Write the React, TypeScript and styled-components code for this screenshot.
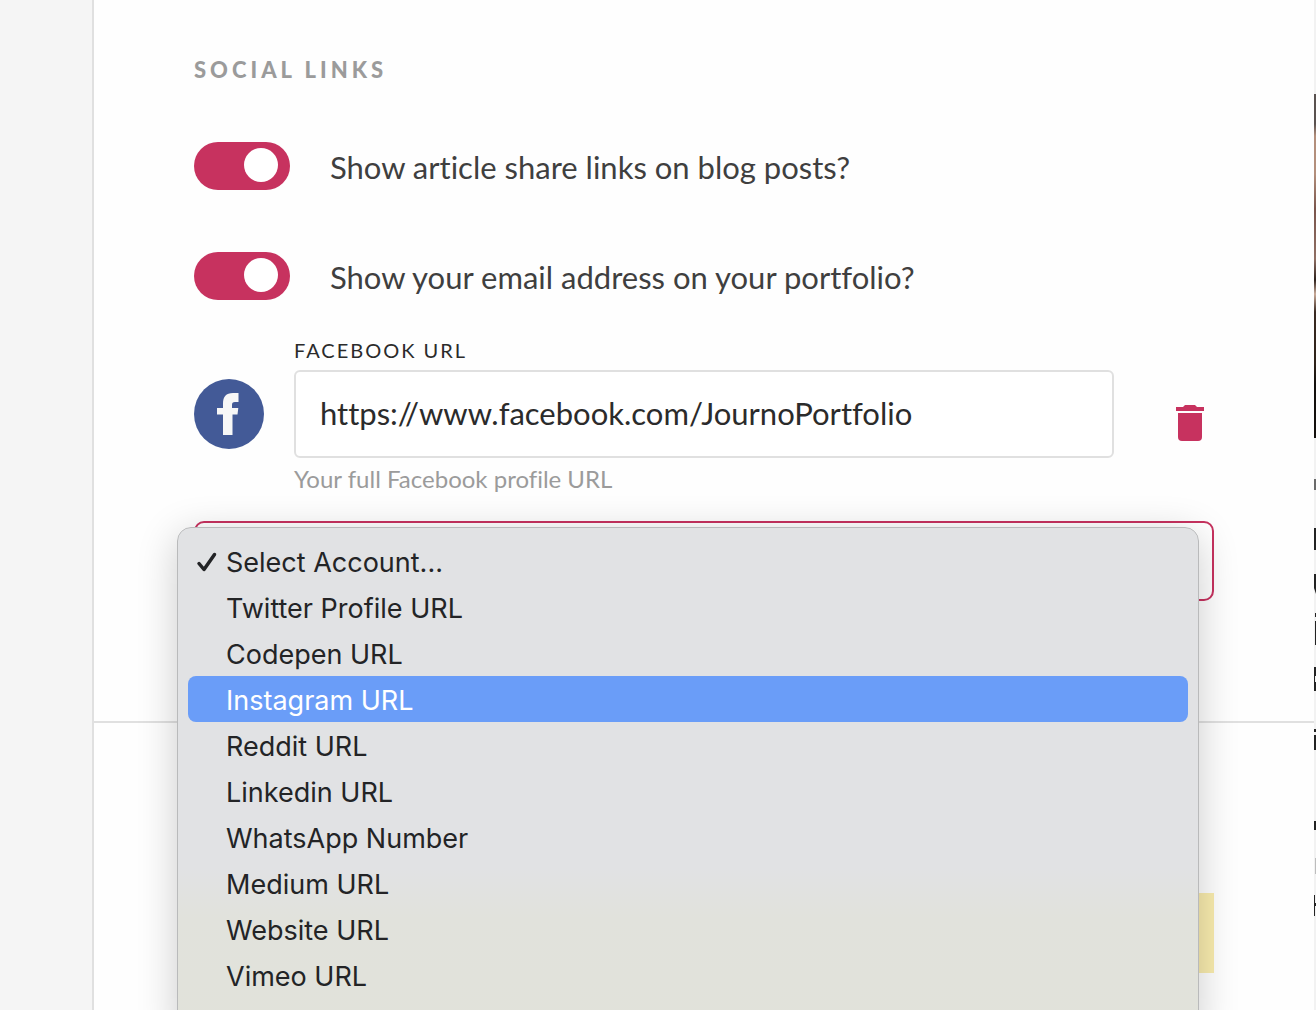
import React, { useState } from "react";
import styled, { createGlobalStyle } from "styled-components";

const color = {
  accent: "#c7325f",
  facebook: "#435a97",
  line: "#e0e0e0",
  text: "#3f3f3f",
  strong: "#2b2b2b",
  muted: "#9b9b9b",
};

const GlobalStyle = createGlobalStyle`
  *, *::before, *::after { box-sizing: border-box; }
  body {
    margin: 0;
    background: #fefefe;
    font-family: Lato, "Open Sans", sans-serif;
    font-variant-ligatures: none;
    color: ${color.text};
  }
`;

const Page = styled.div`
  display: grid;
  grid-template-columns: 94px minmax(0, 1fr) 2px;
  min-height: 100vh;
  max-height: 100vh;
  overflow: hidden;
`;

const Sidebar = styled.aside`
  background: #f5f5f5;
  border-right: 2px solid ${color.line};
`;

const Settings = styled.main`
  display: flex;
  flex-direction: column;
`;

const Section = styled.section`
  padding: 56px 100px 120px;
  border-bottom: 2px solid ${color.line};
`;

const NoticeSection = styled.section`
  padding: 170px 100px 0;
`;

const Notice = styled.div`
  height: 80px;
  background: #f9ecae;
`;

const Heading = styled.h2`
  margin: 0 0 58px;
  font-size: 22px;
  line-height: 28px;
  font-weight: 900;
  letter-spacing: 4px;
  text-transform: uppercase;
  color: ${color.muted};
`;

const ToggleRow = styled.label`
  display: flex;
  align-items: flex-start;
  gap: 40px;
  height: 48px;
  margin-bottom: 62px;
  font-size: 31px;
  line-height: 50px;

  & + & {
    margin-bottom: 40px;
  }
`;

const Switch = styled.input`
  appearance: none;
  flex: none;
  display: flex;
  justify-content: flex-start;
  width: 96px;
  height: 48px;
  margin: 0;
  padding: 6px 12px;
  border-radius: 24px;
  background: #c4c4c4;
  cursor: pointer;

  &::before {
    content: "";
    width: 34px;
    height: 34px;
    border-radius: 50%;
    background: #fff;
  }

  &:checked {
    justify-content: flex-end;
    background: ${color.accent};
  }
`;

const LinkRow = styled.div`
  display: grid;
  grid-template-columns: 70px minmax(0, 1fr) 28px;
  grid-template-areas:
    ". label ."
    "icon input remove"
    ". help .";
  column-gap: 30px;
  padding-right: 10px;
`;

const LinkLabel = styled.label`
  grid-area: label;
  margin-bottom: 10px;
  font-size: 20px;
  line-height: 20px;
  letter-spacing: 2px;
  text-transform: uppercase;
  color: ${color.strong};
`;

const BrandIcon = styled.svg`
  grid-area: icon;
  align-self: center;
  width: 70px;
  height: 70px;
`;

const LinkInput = styled.input`
  grid-area: input;
  width: calc(100% - 32px);
  height: 88px;
  padding: 0 24px 2px;
  border: 2px solid ${color.line};
  border-radius: 6px;
  background: #fff;
  font: 400 31px Lato, sans-serif;
  font-variant-ligatures: none;
  color: ${color.strong};
  outline: none;
`;

const Help = styled.p`
  grid-area: help;
  margin: 7px 0 28px;
  font-size: 24px;
  line-height: 28px;
  color: ${color.muted};
`;

const RemoveButton = styled.button`
  grid-area: remove;
  align-self: end;
  display: flex;
  margin-bottom: 17px;
  padding: 0;
  border: 0;
  background: none;
  color: ${color.accent};
  cursor: pointer;
`;

const AccountPicker = styled.div`
  position: relative;
`;

const AccountSelect = styled.select`
  appearance: none;
  display: block;
  width: 100%;
  height: 80px;
  padding: 0 24px;
  border: 2px solid ${color.accent};
  border-radius: 10px;
  background: #fff;
  font: 400 31px Lato, sans-serif;
  color: ${color.accent};
`;

const Menu = styled.div`
  position: absolute;
  top: 6px;
  left: -17px;
  right: 15px;
  z-index: 1;
  padding: 10px 10px 40px;
  border: 1px solid #b9babb;
  border-radius: 14px;
  background: linear-gradient(#e1e2e4 340px, #e1e2dc 390px, #e1e2da 100%);
  box-shadow: 0 8px 40px rgba(0, 0, 0, 0.2);
`;

const MenuItem = styled.button<{ $active: boolean }>`
  display: flex;
  align-items: center;
  width: 100%;
  height: 46px;
  padding: 2px 0 0;
  border: 0;
  border-radius: 8px;
  background: ${(p) => (p.$active ? "#6a9df8" : "transparent")};
  color: ${(p) => (p.$active ? "#fff" : "#232426")};
  font: 400 27px Inter, sans-serif;
  text-align: left;
`;

const Mark = styled.span`
  display: flex;
  justify-content: center;
  width: 38px;
`;

const Preview = styled.aside`
  overflow: hidden;
  background: #f2f2f2;
`;

const Photo = styled.div`
  height: 344px;
  margin-top: 94px;
  background: linear-gradient(
    #5a5250 0 30px,
    #b38f7c 42px 80px,
    #7a554c 115px,
    #8f6f64 165px,
    #2e211c 186px,
    #c9aa98 200px,
    #3a2a22 218px,
    #2e2219 270px,
    #14100d 290px
  );
`;

const Fragments = styled.svg`
  display: block;
  width: 2px;
  height: 572px;
`;

const accounts = [
  "Select Account...",
  "Twitter Profile URL",
  "Codepen URL",
  "Instagram URL",
  "Reddit URL",
  "Linkedin URL",
  "WhatsApp Number",
  "Medium URL",
  "Website URL",
  "Vimeo URL",
];

function Toggle({ label }: { label: string }) {
  return (
    <ToggleRow>
      <Switch type="checkbox" defaultChecked />
      {label}
    </ToggleRow>
  );
}

function CheckMark() {
  return (
    <svg width="22" height="22" viewBox="0 0 22 22" aria-hidden="true">
      <path
        d="M3 12.500 L8 18.500 L18.500 3.500"
        fill="none"
        stroke="#232426"
        strokeWidth="3.500"
        strokeLinecap="round"
        strokeLinejoin="round"
      />
    </svg>
  );
}

export default function App() {
  const [selected, setSelected] = useState(accounts[0]);
  const [active, setActive] = useState("Instagram URL");

  return (
    <>
      <GlobalStyle />
      <Page>
        <Sidebar />
        <Settings>
          <Section>
            <Heading>Social Links</Heading>
            <Toggle label="Show article share links on blog posts?" />
            <Toggle label="Show your email address on your portfolio?" />
            <LinkRow>
              <LinkLabel htmlFor="facebook">Facebook URL</LinkLabel>
              <BrandIcon viewBox="0 0 70 70" aria-hidden="true">
                <circle cx="35" cy="35" r="35" fill={color.facebook} />
                <path
                  fill="#f7f7f7"
                  d="M29 56V35.500H23V29H29V25C29 17.500 32 14 39 14H44.500V23H41C38.700 23 38 24 38 26V29H44.300L43.500 35.500H38.500V56Z"
                />
              </BrandIcon>
              <LinkInput
                id="facebook"
                type="text"
                defaultValue="https://www.facebook.com/JournoPortfolio"
              />
              <RemoveButton type="button" aria-label="Remove">
                <svg width="28" height="36" viewBox="0 0 28 36" fill="currentColor">
                  <path d="M0 2H7L9 0H19L21 2H28V6H0Z" />
                  <path d="M2 8H26V32Q26 36 22 36H6Q2 36 2 32Z" />
                </svg>
              </RemoveButton>
              <Help>Your full Facebook profile URL</Help>
            </LinkRow>
            <AccountPicker>
              <AccountSelect
                aria-label="Account"
                value={selected}
                onChange={(e) => setSelected(e.target.value)}
              >
                {accounts.map((name) => (
                  <option key={name}>{name}</option>
                ))}
              </AccountSelect>
              <Menu role="listbox" aria-label="Account">
                {accounts.map((name) => (
                  <MenuItem
                    key={name}
                    type="button"
                    role="option"
                    aria-selected={name === selected}
                    $active={name === active}
                    onMouseEnter={() => setActive(name)}
                    onClick={() => setSelected(name)}
                  >
                    <Mark>{name === selected && <CheckMark />}</Mark>
                    {name}
                  </MenuItem>
                ))}
              </Menu>
            </AccountPicker>
          </Section>
          <NoticeSection>
            <Notice />
          </NoticeSection>
        </Settings>
        <Preview>
          <Photo />
          <Fragments viewBox="0 0 2 572" aria-hidden="true" fill="#232323">
            <rect y="41" width="2" height="11" fill="#6b6b6b" />
            <rect y="90" width="2" height="22" />
            <path d="M0 136H2V156L0 150Z" />
            <rect x="1" y="175" width="1" height="4" />
            <rect x="1" y="183" width="1" height="24" />
            <path d="M0 229H2V238H1V244H2V253H0Z" />
            <rect y="291" width="2" height="3" />
            <rect y="297" width="2" height="15" />
            <rect y="383" width="2" height="9" />
            <rect x="1" y="420" width="1" height="16" fill="#bdbdbd" />
            <path d="M0 457H1V465H2V468H1V478H0Z" />
          </Fragments>
        </Preview>
      </Page>
    </>
  );
}
